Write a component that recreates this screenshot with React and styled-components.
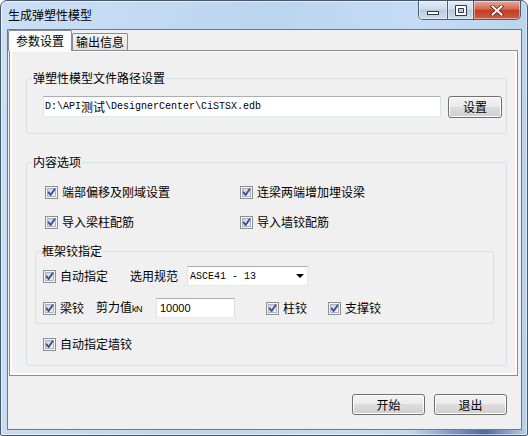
import React from "react";
import styled, { createGlobalStyle } from "styled-components";

const GlobalStyle = createGlobalStyle`
  html, body {
    margin: 0;
    padding: 0;
    background: #ffffff;
  }
  body {
    font-family: "Noto Sans CJK SC", "Liberation Sans", sans-serif;
    font-size: 12px;
    color: #000000;
  }
  * {
    box-sizing: border-box;
  }
`;

const Window = styled.div`
  width: 528px;
  height: 436px;
  display: flex;
  flex-direction: column;
  padding: 0 5px 5px 6px;
  border: 1px solid #4b5666;
  border-radius: 7px 7px 2px 2px;
  background:
    linear-gradient(
        to right,
        rgba(30, 60, 130, 0) 78%,
        rgba(30, 60, 130, 0.7) 92%,
        rgba(30, 60, 130, 0) 100%
      )
      bottom / 100% 5px no-repeat,
    linear-gradient(100deg, #c9e0f7 0%, #bcd5ef 45%, #c4dcf5 70%, #b6d0eb 100%);
  box-shadow: inset 0 0 0 1px rgba(255, 255, 255, 0.55);
`;

const TitleBar = styled.div`
  height: 28px;
  flex: none;
  display: flex;
  justify-content: space-between;
  align-items: flex-start;
`;

const Title = styled.span`
  padding: 7px 0 0 1px;
  line-height: 14px;
  font-size: 12px;
`;

const Controls = styled.div`
  display: flex;
  height: 19px;
  margin-right: 1px;
  border: 1px solid #4d5d73;
  border-top: none;
  border-radius: 0 0 5px 5px;
  overflow: hidden;
`;

const CtrlButton = styled.div`
  width: ${props => props.$w}px;
  display: flex;
  align-items: center;
  justify-content: center;
  background: ${props =>
    props.$close
      ? "linear-gradient(#eaa898, #d66a51 45%, #c33d23 50%, #cf5b40 100%)"
      : "linear-gradient(#e2ecf7, #cddbec 45%, #b8cae0 50%, #ccdcec 100%)"};
  box-shadow: inset 0 0 0 1px rgba(255, 255, 255, 0.45);
  & + & {
    border-left: 1px solid #4d5d73;
  }
`;

const Client = styled.div`
  flex: 1;
  display: flex;
  flex-direction: column;
  background: #f0f0f0;
  border: 1px solid #6f7785;
  padding: 0 3px 0 0;
`;

const TabStrip = styled.div`
  display: flex;
  align-items: flex-end;
  height: 20px;
  position: relative;
  z-index: 1;
`;

const Tab = styled.div`
  width: ${props => props.$w}px;
  height: ${props => (props.$active ? 21 : 17)}px;
  margin-bottom: ${props => (props.$active ? -1 : 0)}px;
  padding-top: ${props => (props.$active ? 3 : 1)}px;
  border: 1px solid #898c95;
  border-bottom: none;
  border-radius: 2px 2px 0 0;
  background: ${props =>
    props.$active ? "#fcfcfc" : "linear-gradient(#f4f4f4, #e3e3e3)"};
  text-align: center;
  line-height: 14px;
`;

const Pane = styled.div`
  margin-left: 1px;
  padding: 1px 2px 2px 2px;
  border: 1px solid #898c95;
  background: #fcfcfc;
`;

const Page = styled.div`
  background: #f0f0f0;
  padding: 19px 8px 7px 14px;
`;

const Group = styled.fieldset`
  margin: ${props => props.$mt || 0}px 0 0 0;
  padding: 0;
  min-width: 0;
  border: 1px solid #d5dfe5;
  border-radius: 3px;
`;

const Legend = styled.legend`
  margin-left: 5px;
  padding: 0 1px;
  line-height: 14px;
  font-size: 12px;
`;

const GroupBody = styled.div`
  padding: ${props => props.$pad};
`;

const PathRow = styled.div`
  display: flex;
  align-items: flex-start;
  gap: 7px;
`;

const TextBox = styled.div`
  width: ${props => props.$w}px;
  height: ${props => props.$h || 21}px;
  display: flex;
  align-items: center;
  padding: 0 ${props => props.$px || 1}px;
  background: #ffffff;
  border: 1px solid;
  border-color: #abadb3 #dbdfe6 #e3e9ef #e2e3ea;
  white-space: nowrap;
  font-family: ${props =>
    props.$sans ? '"Liberation Sans", sans-serif' : '"Liberation Mono", monospace'};
  font-size: ${props => (props.$sans ? 11 : 10)}px;
`;

const Cjk = styled.span`
  font-family: "Noto Sans CJK SC", sans-serif;
  font-size: 12px;
`;

const Select = styled.div`
  width: 121px;
  height: 20px;
  display: flex;
  align-items: center;
  justify-content: space-between;
  padding: 0 3px 0 2px;
  background: #ffffff;
  border: 1px solid;
  border-color: #abadb3 #e3e9ef #e3e9ef #e2e3ea;
  font-family: "Liberation Mono", monospace;
  font-size: 10px;
  white-space: nowrap;
`;

const Arrow = styled.span`
  width: 0;
  height: 0;
  border-left: 4px solid transparent;
  border-right: 4px solid transparent;
  border-top: 4px solid #000000;
`;

const PushButton = styled.button`
  width: ${props => props.$w}px;
  height: ${props => props.$h || 21}px;
  flex: none;
  padding: 0;
  font-family: "Noto Sans CJK SC", sans-serif;
  font-size: 12px;
  line-height: 14px;
  color: #000000;
  border: 1px solid #707070;
  border-radius: 3px;
  background: linear-gradient(#f2f2f2, #ebebeb 50%, #dddddd 50%, #cfcfcf);
  box-shadow: inset 0 0 0 1px #fcfcfc;
`;

const OptionGrid = styled.div`
  display: grid;
  grid-template-columns: 195px auto;
  grid-auto-rows: 20px;
  row-gap: 10px;
  align-items: center;
  padding-left: 10px;
`;

const Row = styled.div`
  display: flex;
  align-items: center;
  height: 20px;
  margin-top: ${props => props.$mt || 0}px;
  padding-left: ${props => props.$pl || 0}px;
`;

const CheckItem = styled.label`
  display: inline-flex;
  align-items: center;
  gap: 4px;
  flex: none;
  width: ${props => (props.$w ? `${props.$w}px` : "auto")};
  margin-left: ${props => props.$ml || 0}px;
  line-height: 14px;
  white-space: nowrap;
`;

const FieldLabel = styled.span`
  flex: none;
  width: ${props => props.$w}px;
  line-height: 14px;
  white-space: nowrap;
`;

const Small = styled.span`
  font-family: "Liberation Sans", sans-serif;
  font-size: 9px;
  letter-spacing: -0.4px;
`;

const Footer = styled.div`
  display: flex;
  justify-content: flex-end;
  gap: 9px;
  padding: 18px 11px 0 0;
`;

const CheckBox = () => (
  <svg width="13" height="13" viewBox="0 0 13 13">
    <defs>
      <linearGradient id="cbFill" x1="0" y1="0" x2="1" y2="1">
        <stop offset="0" stopColor="#c9ccd1" />
        <stop offset="1" stopColor="#f6f6f6" />
      </linearGradient>
    </defs>
    <rect x="0.5" y="0.5" width="12" height="12" fill="#f4f4f4" stroke="#8e8f8f" />
    <rect x="2.5" y="2.5" width="8" height="8" fill="url(#cbFill)" stroke="#aeb3b9" />
    <path
      d="M3.6 6.4 L5.6 9 L9.6 3.2"
      fill="none"
      stroke="#2f4d9c"
      strokeWidth="1.8"
      strokeLinecap="round"
      strokeLinejoin="round"
    />
  </svg>
);

const Check = ({ children, w, ml }) => (
  <CheckItem $w={w} $ml={ml}>
    <CheckBox />
    <span>{children}</span>
  </CheckItem>
);

const MinIcon = () => (
  <svg width="12" height="12" viewBox="0 0 12 12">
    <rect x="0.5" y="7.5" width="11" height="3" fill="#ffffff" stroke="#2f3b4c" />
  </svg>
);

const MaxIcon = () => (
  <svg width="12" height="11" viewBox="0 0 12 11">
    <path d="M0.5 0.5 H11.5 V10.5 H0.5 Z M3.5 3.5 V7.5 H8.5 V3.5 Z" fill="#ffffff" stroke="#2f3b4c" fillRule="evenodd" />
  </svg>
);

const CloseIcon = () => (
  <svg width="14" height="11" viewBox="0 0 14 11">
    <path d="M2.5 1.5 L11.5 9.5 M11.5 1.5 L2.5 9.5" stroke="#5a2418" strokeWidth="3.6" strokeLinecap="square" />
    <path d="M2.5 1.5 L11.5 9.5 M11.5 1.5 L2.5 9.5" stroke="#ffffff" strokeWidth="2" strokeLinecap="square" />
  </svg>
);

const App = () => (
  <>
    <GlobalStyle />
    <Window>
      <TitleBar>
        <Title>生成弹塑性模型</Title>
        <Controls>
          <CtrlButton $w={28}>
            <MinIcon />
          </CtrlButton>
          <CtrlButton $w={26}>
            <MaxIcon />
          </CtrlButton>
          <CtrlButton $w={47} $close>
            <CloseIcon />
          </CtrlButton>
        </Controls>
      </TitleBar>

      <Client>
        <TabStrip>
          <Tab $w={64} $active>
            参数设置
          </Tab>
          <Tab $w={56}>输出信息</Tab>
        </TabStrip>

        <Pane>
          <Page>
            <Group>
              <Legend>弹塑性模型文件路径设置</Legend>
              <GroupBody $pad="11px 4px 15px 16px">
                <PathRow>
                  <TextBox $w={398}>
                    D:\API<Cjk>测试</Cjk>\DesignerCenter\CiSTSX.edb
                  </TextBox>
                  <PushButton $w={54} $h={22}>
                    设置
                  </PushButton>
                </PathRow>
              </GroupBody>
            </Group>

            <Group $mt={21}>
              <Legend>内容选项</Legend>
              <GroupBody $pad="13px 12px 11px 8px">
                <OptionGrid>
                  <Check>端部偏移及刚域设置</Check>
                  <Check>连梁两端增加埋设梁</Check>
                  <Check>导入梁柱配筋</Check>
                  <Check>导入墙铰配筋</Check>
                </OptionGrid>

                <Group $mt={12}>
                  <Legend>框架铰指定</Legend>
                  <GroupBody $pad="8px 0 5px 7px">
                    <Row>
                      <Check w={87}>自动指定</Check>
                      <FieldLabel $w={57}>选用规范</FieldLabel>
                      <Select>
                        <span>ASCE41 - 13</span>
                        <Arrow />
                      </Select>
                    </Row>
                    <Row $mt={12}>
                      <Check w={53}>梁铰</Check>
                      <FieldLabel $w={60}>
                        剪力值<Small>kN</Small>
                      </FieldLabel>
                      <TextBox $w={79} $h={20} $px={3} $sans>
                        10000
                      </TextBox>
                      <Check w={62} ml={31}>
                        柱铰
                      </Check>
                      <Check>支撑铰</Check>
                    </Row>
                  </GroupBody>
                </Group>

                <Row $mt={10} $pl={8}>
                  <Check>自动指定墙铰</Check>
                </Row>
              </GroupBody>
            </Group>
          </Page>
        </Pane>

        <Footer>
          <PushButton $w={73}>开始</PushButton>
          <PushButton $w={73}>退出</PushButton>
        </Footer>
      </Client>
    </Window>
  </>
);

export default App;
